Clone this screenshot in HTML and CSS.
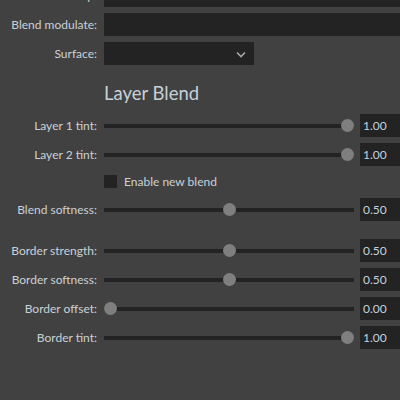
FILE: index.html
```html
<!DOCTYPE html>
<html>
<head>
<meta charset="utf-8">
<link rel="stylesheet" href="styles.css">
</head>
<body>
<div class="panel">
  <div class="label">Blend map:</div>
  <div class="field"></div>

  <div class="label">Blend modulate:</div>
  <div class="field"></div>

  <div class="label">Surface:</div>
  <div class="control">
    <div class="select">
      <svg class="chev" width="10" height="7" viewBox="0 0 10 7"><path d="M1 1.5 L5 5.5 L9 1.5" fill="none" stroke="#a6a6a6" stroke-width="1.6"/></svg>
    </div>
  </div>

  <div class="label"></div>
  <div class="heading">Layer Blend</div>

  <div class="label">Layer 1 tint:</div>
  <div class="slider-row">
    <div class="track"><div class="knob" style="--v:1"></div></div>
    <div class="value">1.00</div>
  </div>

  <div class="label">Layer 2 tint:</div>
  <div class="slider-row">
    <div class="track"><div class="knob" style="--v:1"></div></div>
    <div class="value">1.00</div>
  </div>

  <div class="label"></div>
  <div class="check-row">
    <span class="checkbox"></span>
    <span class="check-text">Enable new blend</span>
  </div>

  <div class="label">Blend softness:</div>
  <div class="slider-row">
    <div class="track"><div class="knob" style="--v:0.5"></div></div>
    <div class="value">0.50</div>
  </div>

  <div class="spacer"></div>
  <div class="spacer"></div>

  <div class="label">Border strength:</div>
  <div class="slider-row">
    <div class="track"><div class="knob" style="--v:0.5"></div></div>
    <div class="value">0.50</div>
  </div>

  <div class="label">Border softness:</div>
  <div class="slider-row">
    <div class="track"><div class="knob" style="--v:0.5"></div></div>
    <div class="value">0.50</div>
  </div>

  <div class="label">Border offset:</div>
  <div class="slider-row">
    <div class="track"><div class="knob" style="--v:0"></div></div>
    <div class="value">0.00</div>
  </div>

  <div class="label">Border tint:</div>
  <div class="slider-row">
    <div class="track"><div class="knob" style="--v:1"></div></div>
    <div class="value">1.00</div>
  </div>
</div>
</body>
</html>
```

FILE: styles.css
```css
html, body {
  margin: 0;
  padding: 0;
  background: #414141;
  width: 400px;
  height: 400px;
  overflow: hidden;
}

body {
  font-family: Lato, "Noto Sans", sans-serif;
  font-size: 12px;
  color: #c9d1d7;
}

.panel {
  display: grid;
  grid-template-columns: 97px 1fr;
  grid-auto-rows: auto;
  column-gap: 7px;
  row-gap: 6px;
  margin-top: -16px;
}

.label {
  display: flex;
  align-items: center;
  justify-content: flex-end;
  white-space: nowrap;
}

.field {
  height: 23px;
  background: #232323;
}

.control {
  display: flex;
  height: 23px;
}

.select {
  width: 150px;
  background: #232323;
  display: flex;
  align-items: center;
  justify-content: flex-end;
  padding-right: 8px;
  box-sizing: border-box;
}

.chev {
  display: block;
  margin-top: 1px;
}

.heading {
  height: 37px;
  font-size: 18.5px;
  line-height: 24px;
  padding-top: 10px;
  box-sizing: border-box;
  color: #c6d0d8;
  white-space: nowrap;
}

.slider-row {
  display: flex;
  align-items: center;
  gap: 6px;
  height: 23px;
}

.track {
  position: relative;
  flex: 0 0 250px;
  height: 4px;
  background: #232323;
}

.knob {
  position: absolute;
  top: -4.5px;
  left: calc(var(--v) * (100% - 13px));
  width: 13px;
  height: 13px;
  border-radius: 50%;
  background: #7f7f7f;
}

.value {
  flex: 1;
  align-self: stretch;
  background: #232323;
  display: flex;
  align-items: center;
  padding-left: 3px;
  color: #c4d2de;
}

.check-row {
  display: flex;
  align-items: flex-start;
  gap: 7px;
  height: 20px;
}

.checkbox {
  width: 13px;
  height: 13px;
  margin-top: 3px;
  background: #232323;
}

.check-text {
  line-height: 20px;
}

.spacer {
  height: 6px;
}
```
